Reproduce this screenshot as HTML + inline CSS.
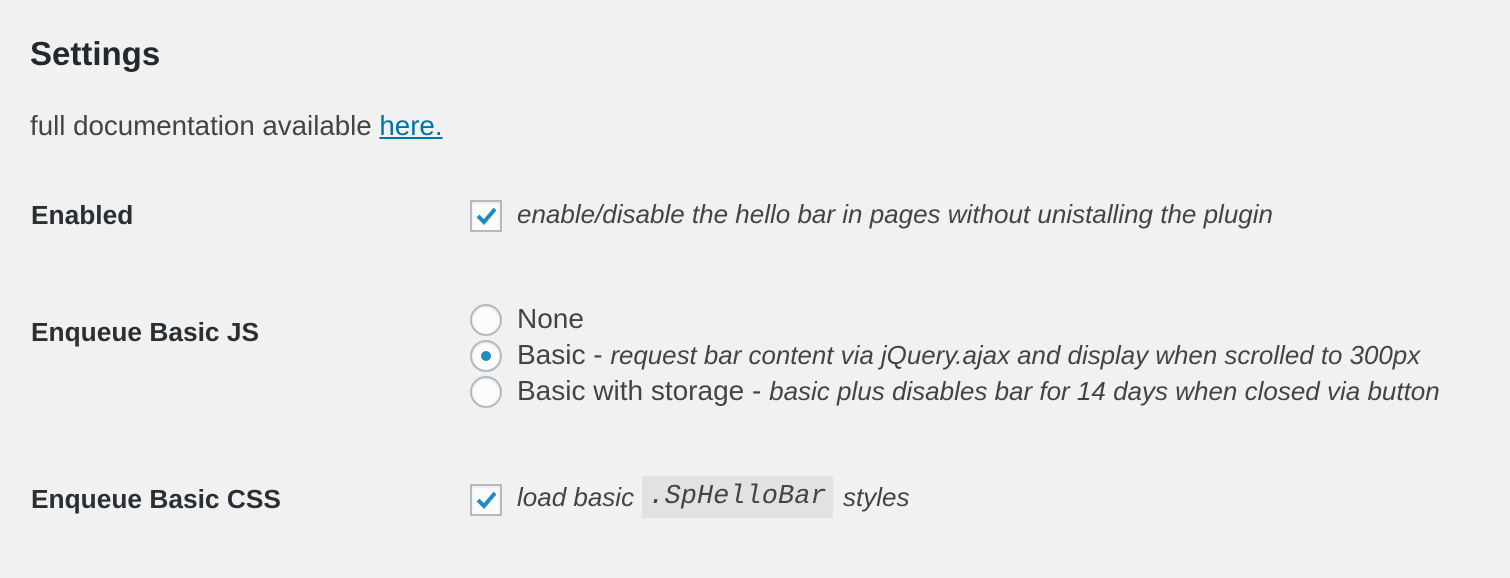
<!DOCTYPE html>
<html><head><style>
body{margin:0;width:1510px;height:578px;background:#f1f1f1;font-family:"Liberation Sans",sans-serif;color:#23282d;position:relative;overflow:hidden}
.a{position:absolute;white-space:nowrap}
h2{position:absolute;left:30px;top:35px;margin:0;font-size:33px;font-weight:600}
.t{font-size:25px;color:#444}
.lab{font-size:26.3px;font-weight:bold;color:#2a2f33;left:31px}
.cb{position:absolute;left:470px;width:28px;height:28px;border:2px solid #b4b9be;background:#fbfbfb;box-shadow:inset 0 1px 2px rgba(0,0,0,.1)}
.rd{position:absolute;left:470px;width:28px;height:28px;border:2px solid #b4b9be;border-radius:50%;background:#fbfbfb;box-shadow:inset 0 1px 2px rgba(0,0,0,.1)}
i{font-size:26px}
</style></head><body>
<h2>Settings</h2>
<div class="a t" style="left:30px;top:110px;font-size:27.7px">full documentation available <span style="color:#0073aa;text-decoration:underline">here.</span></div>
<div class="a lab" style="top:200px">Enabled</div>
<div class="cb" style="top:200px"><svg width="28" height="28" viewBox="0 0 28 28"><path d="M6 14 L12 20 L23 7" fill="none" stroke="#1e8cbe" stroke-width="4"/></svg></div>
<div class="a t" style="left:517px;top:199px"><i>enable/disable the hello bar in pages without unistalling the plugin</i></div>
<div class="a lab" style="top:317px">Enqueue Basic JS</div>
<div class="rd" style="top:304px"></div>
<div class="rd" style="top:340px"><div style="position:absolute;left:9px;top:9px;width:10px;height:10px;border-radius:50%;background:#1e8cbe"></div></div>
<div class="rd" style="top:376px"></div>
<div class="a t" style="left:517px;top:303px;font-size:28px">None</div>
<div class="a t" style="left:517px;top:339px;font-size:28px">Basic - <i style="font-size:25.9px">request bar content via jQuery.ajax and display when scrolled to 300px</i></div>
<div class="a t" style="left:517px;top:375px;font-size:28px">Basic with storage - <i style="font-size:26px">basic plus disables bar for 14 days when closed via button</i></div>
<div class="a lab" style="top:484px">Enqueue Basic CSS</div>
<div class="cb" style="top:484px"><svg width="28" height="28" viewBox="0 0 28 28"><path d="M6 14 L12 20 L23 7" fill="none" stroke="#1e8cbe" stroke-width="4"/></svg></div>
<div class="a t" style="left:517px;top:482px"><i>load basic</i></div>
<div class="a" style="left:642px;top:476px;width:191px;height:42px;background:#e2e2e2;font-family:'Liberation Mono',monospace;font-style:italic;font-size:27px;color:#444;line-height:42px;text-align:center">.SpHelloBar</div>
<div class="a t" style="left:843px;top:482px"><i>styles</i></div>
</body></html>
